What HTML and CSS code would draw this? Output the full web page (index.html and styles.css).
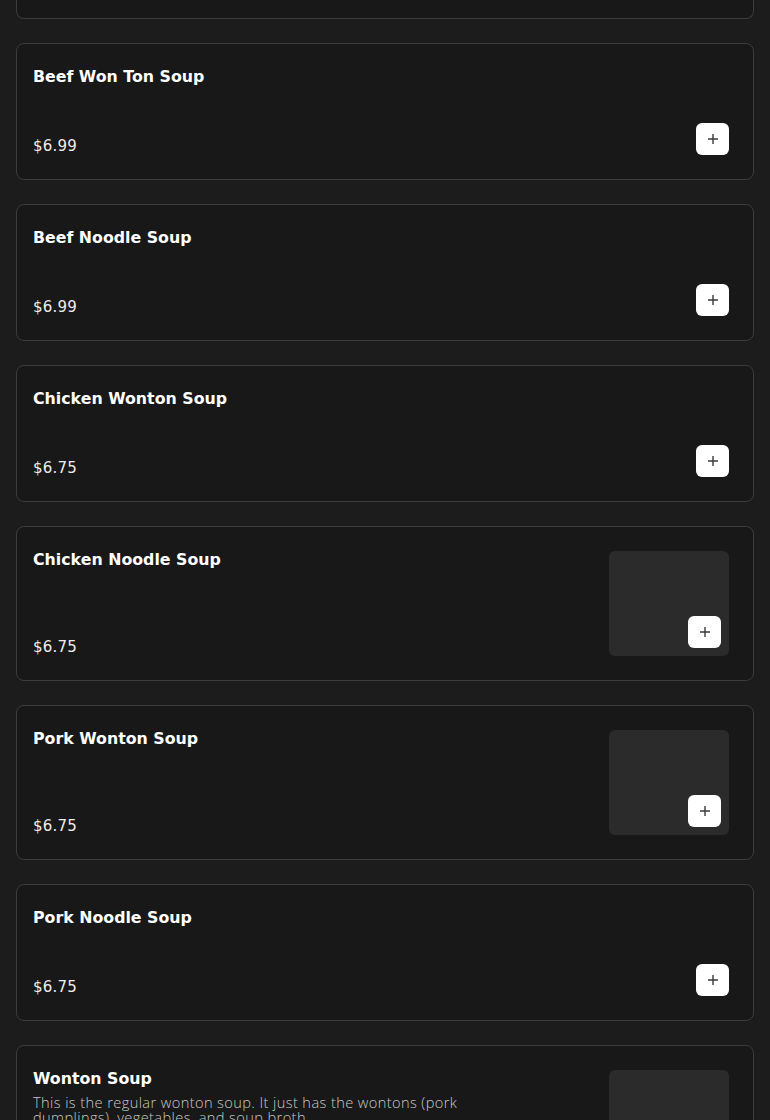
FILE: index.html
```html
<!DOCTYPE html>
<html lang="en">
<head>
<meta charset="utf-8">
<title>Menu</title>
<link rel="stylesheet" href="styles.css">
</head>
<body>
<main class="menu">
  <div class="card card-cut"></div>

  <article class="card">
    <div class="info">
      <h3 class="name">Beef Won Ton Soup</h3>
      <div class="price">$6.99</div>
    </div>
    <div class="side"><button class="add" aria-label="Add"><svg viewBox="0 0 12 12" width="12" height="12"><path d="M6 1v10M1 6h10" /></svg></button></div>
  </article>

  <article class="card">
    <div class="info">
      <h3 class="name">Beef Noodle Soup</h3>
      <div class="price">$6.99</div>
    </div>
    <div class="side"><button class="add" aria-label="Add"><svg viewBox="0 0 12 12" width="12" height="12"><path d="M6 1v10M1 6h10" /></svg></button></div>
  </article>

  <article class="card">
    <div class="info">
      <h3 class="name">Chicken Wonton Soup</h3>
      <div class="price">$6.75</div>
    </div>
    <div class="side"><button class="add" aria-label="Add"><svg viewBox="0 0 12 12" width="12" height="12"><path d="M6 1v10M1 6h10" /></svg></button></div>
  </article>

  <article class="card">
    <div class="info">
      <h3 class="name">Chicken Noodle Soup</h3>
      <div class="price">$6.75</div>
    </div>
    <div class="side thumb"><button class="add" aria-label="Add"><svg viewBox="0 0 12 12" width="12" height="12"><path d="M6 1v10M1 6h10" /></svg></button></div>
  </article>

  <article class="card">
    <div class="info">
      <h3 class="name">Pork Wonton Soup</h3>
      <div class="price">$6.75</div>
    </div>
    <div class="side thumb"><button class="add" aria-label="Add"><svg viewBox="0 0 12 12" width="12" height="12"><path d="M6 1v10M1 6h10" /></svg></button></div>
  </article>

  <article class="card">
    <div class="info">
      <h3 class="name">Pork Noodle Soup</h3>
      <div class="price">$6.75</div>
    </div>
    <div class="side"><button class="add" aria-label="Add"><svg viewBox="0 0 12 12" width="12" height="12"><path d="M6 1v10M1 6h10" /></svg></button></div>
  </article>

  <article class="card">
    <div class="info">
      <h3 class="name">Wonton Soup</h3>
      <p class="desc">This is the regular wonton soup. It just has the wontons (pork dumplings), vegetables, and soup broth.</p>
      <div class="price">$6.75</div>
    </div>
    <div class="side thumb"><button class="add" aria-label="Add"><svg viewBox="0 0 12 12" width="12" height="12"><path d="M6 1v10M1 6h10" /></svg></button></div>
  </article>
</main>
</body>
</html>
```

FILE: styles.css
```css
* { box-sizing: border-box; }
html, body { margin: 0; padding: 0; }
body {
  background: #1c1c1c;
  color: #fff;
  font-family: "DejaVu Sans", "Liberation Sans", sans-serif;
}
.menu {
  display: flex;
  flex-direction: column;
  gap: 24px;
  padding: 0 16px 40px;
}
.card {
  display: flex;
  gap: 16px;
  background: #181818;
  border: 1px solid #3c3c3c;
  border-radius: 8px;
  padding: 16px 24px 16px 16px;
}
.card-cut {
  height: 19px;
  padding: 0;
  border-top: none;
  border-radius: 0 0 8px 8px;
}
.info {
  flex: 1;
  display: flex;
  flex-direction: column;
  min-height: 103px;
  min-width: 0;
}
.name {
  margin: 5px 0 0;
  font-size: 15.8px;
  font-weight: 700;
  line-height: 24px;
  color: #fff;
}
.desc {
  margin: 4px 0 0;
  max-width: 470px;
  font-family: "Open Sans", "DejaVu Sans", sans-serif;
  font-weight: 300;
  font-size: 14.6px;
  letter-spacing: 0.4px;
  line-height: 15px;
  color: #c8c8c8;
}
.price {
  margin-top: auto;
  padding-bottom: 7px;
  font-size: 15px;
  letter-spacing: 0.2px;
  line-height: 20px;
  color: #ececec;
}
.side {
  width: 120px;
  margin: 8px 0;
  display: flex;
  justify-content: flex-end;
  align-items: flex-end;
  position: relative;
}
.thumb {
  height: 105px;
  background: #2b2b2b;
  border-radius: 6px;
  padding: 8px;
}
.add {
  width: 33px;
  height: 32px;
  border: none;
  border-radius: 6px;
  background: #fff;
  display: flex;
  align-items: center;
  justify-content: center;
  padding: 0;
  cursor: pointer;
}
.add svg path {
  stroke: #3a3a3a;
  stroke-width: 1.4;
  fill: none;
}
```
